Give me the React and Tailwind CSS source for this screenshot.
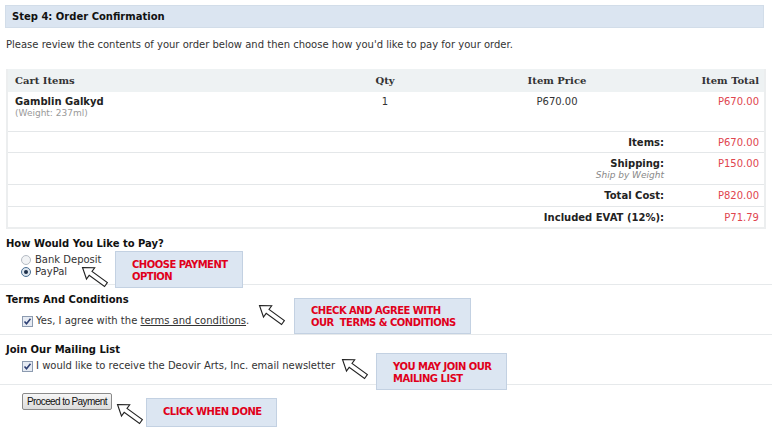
function Pointer({ className }) {
  return (
    <svg width="32" height="26" viewBox="0 0 32 26" className={`absolute ${className}`}>
      <g transform="translate(1.5,1.5) rotate(36)">
        <polygon
          points="0,0 10,-7 10,-2.4 29,-2.4 29,2.4 10,2.4 10,7"
          fill="#fff"
          stroke="#222"
          strokeWidth="1.1"
          strokeLinejoin="miter"
        />
      </g>
    </svg>
  );
}

function Callout({ className, children }) {
  return (
    <div
      className={`absolute bg-[#dce6f2] border border-[#c3d1e2] text-[#e0001b] font-bold text-[10px] leading-[12px] tracking-[-0.5px] ${className}`}
    >
      {children}
    </div>
  );
}

function Check() {
  return (
    <span className="inline-flex w-[11px] h-[11px] border border-[#8c9bb0] bg-[#e6ebf3] items-center justify-center mr-[3px]">
      <svg width="9" height="9" viewBox="0 0 9 9">
        <path d="M1.5 4.5 L3.5 6.8 L7.5 1.8" fill="none" stroke="#2d3f73" strokeWidth="1.6" />
      </svg>
    </span>
  );
}

function Radio({ checked }) {
  return (
    <span
      className={`inline-flex w-[10px] h-[10px] rounded-full border items-center justify-center mr-[4px] ${
        checked ? "border-[#4a6f93] bg-[#dde6ef]" : "border-[#b5bcc4] bg-[#f1f3f5]"
      }`}
    >
      {checked && <span className="w-[4px] h-[4px] rounded-full bg-[#1d2f49]" />}
    </span>
  );
}

const rowLine = "border-t border-[#e4e7e9]";

export default function App() {
  return (
    <div className="relative w-[772px] h-[432px] overflow-hidden bg-white text-[10px] text-[#333] font-['DejaVu_Sans',Verdana,sans-serif]">
      <div className="pt-[5px] pl-[5px]">
        <div className="w-[759px] h-[23px] bg-[#dbe5f1] border border-[#d2dde9] flex items-center pl-[6px] font-bold text-[#111]">
          Step 4: Order Confirmation
        </div>
      </div>

      <p className="mt-[10px] ml-[6px] leading-[13px]">
        Please review the contents of your order below and then choose how you'd like to pay for your order.
      </p>

      <div className="mt-[18px] ml-[6px] w-[760px] border-l-2 border-r-2 border-b-2 border-[#eceeef]">
        <div className="grid grid-cols-[327px_100px_244px_1fr] h-[23px] items-center bg-[#eef2f3] font-bold text-[#333] font-['DejaVu_Serif',Georgia,serif]">
          <div className="pl-[7px]">Cart Items</div>
          <div className="text-center">Qty</div>
          <div className="text-center">Item Price</div>
          <div className="text-right pr-[5px]">Item Total</div>
        </div>
        <div className="grid grid-cols-[327px_100px_244px_1fr] h-[39px] pt-[4px] items-start">
          <div className="pl-[7px]">
            <div className="font-bold text-[#222] leading-[12px]">Gamblin Galkyd</div>
            <div className="text-[9px] text-[#999] leading-[11px]">(Weight: 237ml)</div>
          </div>
          <div className="text-center leading-[12px]">1</div>
          <div className="text-center leading-[12px]">P670.00</div>
          <div className="text-right pr-[5px] text-[#e0454e] leading-[12px]">P670.00</div>
        </div>
        <div className={`grid grid-cols-[671px_1fr] h-[21px] items-center ${rowLine}`}>
          <div className="text-right pr-[15px] font-bold text-[#222]">Items:</div>
          <div className="text-right pr-[5px] text-[#e0454e]">P670.00</div>
        </div>
        <div className={`grid grid-cols-[671px_1fr] h-[32px] pt-[5px] items-start ${rowLine}`}>
          <div className="text-right pr-[15px]">
            <div className="font-bold text-[#222] leading-[12px]">Shipping:</div>
            <div className="italic text-[9px] text-[#888] leading-[11px]">Ship by Weight</div>
          </div>
          <div className="text-right pr-[5px] text-[#e0454e] leading-[12px]">P150.00</div>
        </div>
        <div className={`grid grid-cols-[671px_1fr] h-[22px] items-center ${rowLine}`}>
          <div className="text-right pr-[15px] font-bold text-[#222]">Total Cost:</div>
          <div className="text-right pr-[5px] text-[#e0454e]">P820.00</div>
        </div>
        <div className={`grid grid-cols-[671px_1fr] h-[21px] items-center ${rowLine}`}>
          <div className="text-right pr-[15px] font-bold text-[#222]">Included EVAT (12%):</div>
          <div className="text-right pr-[5px] text-[#e0454e]">P71.79</div>
        </div>
      </div>

      <div className="h-[56px] pt-[8px] pl-[6px] border-b border-[#e6e9eb]">
        <div className="font-bold text-[#111] leading-[13px]">How Would You Like to Pay?</div>
        <div className="pl-[15px] pt-[4px] leading-[12px]">
          <div className="flex items-center"><Radio />Bank Deposit</div>
          <div className="flex items-center"><Radio checked />PayPal</div>
        </div>
      </div>

      <div className="h-[50px] pt-[8px] pl-[6px] border-b border-[#e6e9eb]">
        <div className="font-bold text-[#111] leading-[13px]">Terms And Conditions</div>
        <div className="pl-[16px] pt-[9px] flex items-center leading-[12px]">
          <Check />
          <span>
            Yes, I agree with the <span className="underline">terms and conditions</span>.
          </span>
        </div>
      </div>

      <div className="h-[50px] pt-[8px] pl-[6px] border-b border-[#e6e9eb]">
        <div className="font-bold text-[#111] leading-[13px]">Join Our Mailing List</div>
        <div className="pl-[16px] pt-[4px] flex items-center leading-[12px]">
          <Check />
          <span>I would like to receive the Deovir Arts, Inc. email newsletter</span>
        </div>
      </div>

      <div className="pt-[8px] pl-[22px]">
        <button className="h-[17px] px-[4px] border border-[#8a8a8a] rounded-[2px] bg-gradient-to-b from-[#f6f6f6] to-[#dcdcdc] text-[10px] leading-[13px] text-[#111] tracking-[-0.6px] font-['Liberation_Sans',Arial,sans-serif]">
          Proceed to Payment
        </button>
      </div>

      <Pointer className="left-[81px] top-[266px]" />
      <Callout className="left-[115px] top-[251px] w-[128px] h-[37px] pl-[16px] pt-[7px]">
        CHOOSE PAYMENT<br />OPTION
      </Callout>

      <Pointer className="left-[258px] top-[304px]" />
      <Callout className="left-[294px] top-[298px] w-[177px] h-[36px] pl-[16px] pt-[6px]">
        CHECK AND AGREE WITH<br />OUR&nbsp; TERMS &amp; CONDITIONS
      </Callout>

      <Pointer className="left-[341px] top-[358px]" />
      <Callout className="left-[376px] top-[353px] w-[131px] h-[37px] pl-[16px] pt-[7px]">
        YOU MAY JOIN OUR<br />MAILING LIST
      </Callout>

      <Pointer className="left-[116px] top-[403px]" />
      <Callout className="left-[146px] top-[398px] w-[131px] h-[29px] pl-[16px] pt-[7px]">
        CLICK WHEN DONE
      </Callout>
    </div>
  );
}
